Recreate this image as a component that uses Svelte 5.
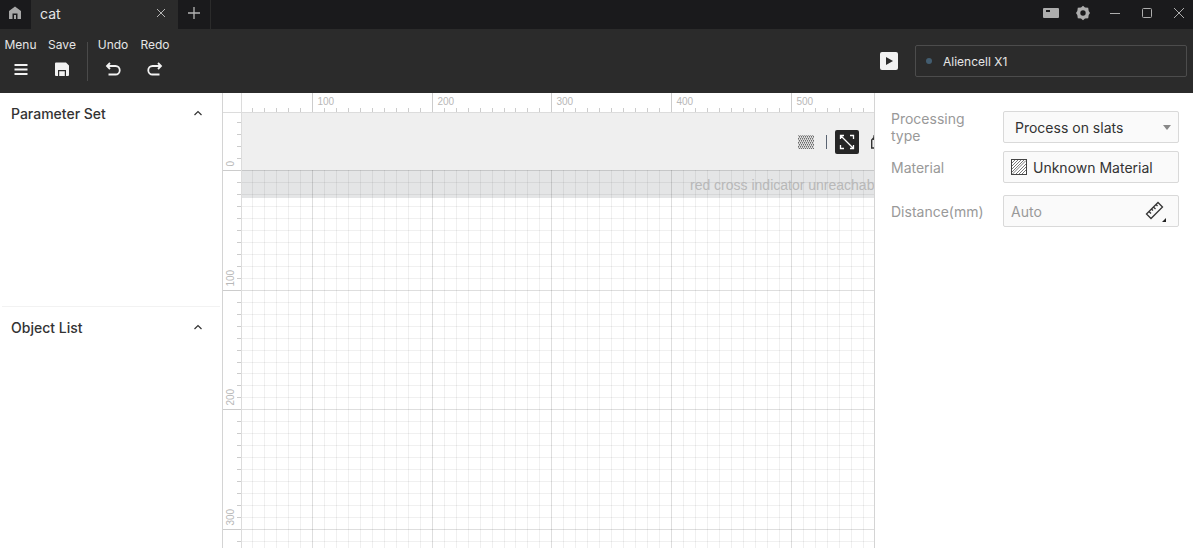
<script lang="ts">
	let machine = $state('Aliencell X1')
	let processing = $state('slats')
	let distance = $state('')

	let width = $state(0)
	let height = $state(0)

	const step = 11.97
	const originX = 89
	const originY = 77
	const rulerW = 18
	const rulerH = 19

	const cols = $derived(
		Array.from({ length: Math.max(0, Math.ceil((width - originX) / step)) + 5 }, (_, i) => i - 5).map((n) => ({
			x: Math.round(originX + n * step) + 0.5,
			major: n % 10 === 0,
			label: 100 + n * 10,
		})),
	)
	const rows = $derived(
		Array.from({ length: Math.max(0, Math.ceil((height - originY) / step)) + 4 }, (_, i) => i - 4).map((n) => ({
			y: Math.round(originY + n * step) + 0.5,
			major: n % 10 === 0,
			label: n * 10,
		})),
	)
</script>

<div class="app">
	<header>
		<nav class="tabs">
			<button class="home" aria-label="Home">
				<svg width="14" height="14" viewBox="0 0 14 14">
					<path d="M7 .5 13 5v8H9.500V7.500h-5V13H1V5Z" fill="#a8a8a8" />
					<path d="M7 9v4" stroke="#a8a8a8" stroke-width="2" />
				</svg>
			</button>
			<div class="tab">
				<span>cat</span>
				<button aria-label="Close tab">
					<svg width="10" height="10" viewBox="0 0 10 10"><path d="m1 1 8 8M9 1 1 9" stroke="#b4b4b4" /></svg>
				</button>
			</div>
			<button class="add" aria-label="New tab">
				<svg width="12" height="12" viewBox="0 0 12 12"><path d="M6 0v12M0 6h12" stroke="#b4b4b4" stroke-width="1.300" /></svg>
			</button>
			<div class="window">
				<button aria-label="Messages">
					<svg width="16" height="16" viewBox="0 0 16 16"><path fill-rule="evenodd" d="M1 3h14a1 1 0 0 1 1 1v8a1 1 0 0 1-1 1H1a1 1 0 0 1-1-1V4a1 1 0 0 1 1-1Zm2 2v2h4V5Z" fill="#adadad" /></svg>
				</button>
				<button aria-label="Settings">
					<svg width="16" height="16" viewBox="0 0 16 16">
						<path
							fill-rule="evenodd"
							d="m8 .8 2 1.700 3.200.300.500 3.200L15 8l-1.300 2-.500 3.200-3.200.300-2 1.700-2-1.700-3.200-.300-.500-3.200L1 8l1.300-2 .500-3.200L6 2.500Zm0 4.500a2.700 2.700 0 1 0 0 5.400 2.700 2.700 0 0 0 0-5.400Z"
							fill="#adadad"
						/>
					</svg>
				</button>
				<button aria-label="Minimize">
					<svg width="16" height="16" viewBox="0 0 16 16"><path d="M3 8.500h10" stroke="#adadad" /></svg>
				</button>
				<button aria-label="Maximize">
					<svg width="16" height="16" viewBox="0 0 16 16"><rect x="3.500" y="3.500" width="9" height="9" rx="1" fill="none" stroke="#adadad" /></svg>
				</button>
				<button aria-label="Close">
					<svg width="16" height="16" viewBox="0 0 16 16"><path d="m3 3 10 10M13 3 3 13" stroke="#adadad" /></svg>
				</button>
			</div>
		</nav>

		<div class="toolbar">
			<button class="tool">
				Menu
				<svg width="16" height="16" viewBox="0 0 16 16"><path d="M1.500 4h13M1.500 8.500h13M1.500 13h13" stroke="#f2f2f2" stroke-width="1.800" /></svg>
			</button>
			<button class="tool">
				Save
				<svg width="16" height="16" viewBox="0 0 16 16">
					<path fill-rule="evenodd" d="M2 1.500h10l3 3V14a1 1 0 0 1-1 1h-2V9H4v6H2a1 1 0 0 1-1-1V2.500a1 1 0 0 1 1-1ZM5.200 10.200h5.600V15H5.200Z" fill="#f2f2f2" />
				</svg>
			</button>
			<span class="divider"></span>
			<button class="tool">
				Undo
				<svg width="16" height="16" viewBox="0 0 16 16"><path d="M5 2 2 5l3 3M2 5h8.500a4 4 0 0 1 0 8.500H3.500" fill="none" stroke="#f2f2f2" stroke-width="1.800" /></svg>
			</button>
			<button class="tool">
				Redo
				<svg width="16" height="16" viewBox="0 0 16 16"><path d="m11 2 3 3-3 3M14 5H5.500a4 4 0 0 0 0 8.500h7" fill="none" stroke="#f2f2f2" stroke-width="1.800" /></svg>
			</button>
			<button class="play" aria-label="Preview">
				<svg width="18" height="18" viewBox="0 0 18 18"><path d="M6 5v8l7-4Z" fill="#2b2b2b" /></svg>
			</button>
			<button class="machine"><i></i>{machine}</button>
		</div>
	</header>

	<main>
		<aside class="left">
			<section>
				<button class="heading">
					Parameter Set
					<svg width="8" height="6" viewBox="0 0 8 6"><path d="m.5 5 3.500-3.500L7.500 5" fill="none" stroke="#333" stroke-width="1.200" /></svg>
				</button>
			</section>
			<section>
				<button class="heading">
					Object List
					<svg width="8" height="6" viewBox="0 0 8 6"><path d="m.5 5 3.500-3.500L7.500 5" fill="none" stroke="#333" stroke-width="1.200" /></svg>
				</button>
			</section>
		</aside>

		<div class="board" bind:clientWidth={width} bind:clientHeight={height}>
			<svg class="grid" width="100%" height="100%" shape-rendering="crispEdges">
				<rect x="19" y="20" width="100%" height="57" fill="#efefef" />
				<rect x="19" y="77" width="100%" height="28" fill="#e4e5e6" />
				{#each cols as { x, major }}
					<line x1={x} x2={x} y1={originY} y2="100%" class:major />
				{/each}
				{#each rows.filter((r) => r.y > originY) as { y, major }}
					<line x1={rulerW} x2="100%" y1={y} y2={y} class:major />
				{/each}

				{#each cols as { x, major, label }}
					<line class="tick" x1={x} x2={x} y1={major ? 0 : 15} y2={rulerH} />
					{#if major}<text x={x + 5} y="12">{label}</text>{/if}
				{/each}
				{#each rows as { y, major, label }}
					<line class="tick" x1={major ? 0 : 14} x2={rulerW} y1={y} y2={y} />
					{#if major}<text transform="translate(11 {y - 4}) rotate(-90)">{label}</text>{/if}
				{/each}
				<line class="edge" x1="0" x2="100%" y1="19.500" y2="19.500" />
				<line class="edge" x1="18.500" x2="18.500" y1="0" y2="100%" />
				<text class="note" x="467" y="97">red cross indicator unreachab</text>
			</svg>

			<div class="canvas-tools">
				<button aria-label="Fill pattern">
					<svg width="16" height="16" viewBox="0 0 16 16">
						<defs>
							<pattern id="mesh" width="2" height="4" patternUnits="userSpaceOnUse">
								<path d="M0 0h1v1H0zM1 2h1v1H1z" fill="#6c6c6c" />
								<path d="M0 1h1v1H0zM1 3h1v1H1z" fill="#a0a0a0" />
							</pattern>
						</defs>
						<rect y="1" width="16" height="14" fill="#dcdcdc" />
						<rect y="1" width="16" height="14" fill="url(#mesh)" />
					</svg>
				</button>
				<span></span>
				<button class="active" aria-label="Frame">
					<svg width="16" height="16" viewBox="0 0 16 16"><path d="M1.500 5V1.500H5M11 1.500h3.500V5M14.500 11v3.500H11M5 14.500H1.500V11M2 2l12 12" fill="none" stroke="#fff" stroke-width="1.300" /></svg>
				</button>
				<button class="camera" aria-label="Camera">
					<svg width="16" height="16" viewBox="0 0 16 16"><path d="M.7 14V6L3 3.500V2h10v1.500L15.300 6v8ZM3 3.500V6" fill="none" stroke="#333" stroke-width="1.400" /></svg>
				</button>
			</div>
		</div>

		<form class="right">
			<label for="processing">Processing type</label>
			<div class="select">
				<select id="processing" bind:value={processing}>
					<option value="slats">Process on slats</option>
				</select>
				<svg width="8" height="5" viewBox="0 0 8 5"><path d="M0 0h8L4 5Z" fill="#888" /></svg>
			</div>

			<label for="material">Material</label>
			<button id="material" class="field" type="button">
				<svg width="16" height="16" viewBox="0 0 16 16">
					<rect x=".5" y=".5" width="15" height="15" fill="#fff" stroke="#444" />
					<path d="M1 4l3-3M1 7l6-6M1 10l9-9M1 13 13 1M1.500 15 15 1.500M5 15 15 5M8 15l7-7M11 15l4-4" stroke="#555" stroke-width=".8" />
				</svg>
				Unknown Material
			</button>

			<label class="distance" for="distance">Distance(mm)</label>
			<div class="field distance">
				<input id="distance" type="text" placeholder="Auto" bind:value={distance} />
				<button type="button" aria-label="Measure">
					<svg width="22" height="22" viewBox="0 0 22 22">
						<path d="m1.500 14 11.500-11.500 4.500 4.500L6 18.500ZM4 11.500l2 2M6.500 9l1.500 1.500M8.500 7l2 2M11 4.500 12.500 6" fill="none" stroke="#333" stroke-width="1.300" />
						<path d="M21 18v4h-4Z" fill="#222" />
					</svg>
				</button>
			</div>
		</form>
	</main>
</div>

<style>
	:global(body) {
		margin: 0;
	}

	.app {
		min-height: 100vh;
		display: flex;
		flex-direction: column;
		font-family: Inter, sans-serif;
		font-size: 14px;
		color: #333;
	}
	button {
		padding: 0;
		border: none;
		background: none;
		font: inherit;
		color: inherit;
		cursor: pointer;
	}
	svg {
		display: block;
		flex: none;
	}

	/* title bar */
	header {
		background: #2b2b2b;
		color: #e6e6e6;
	}
	.tabs {
		height: 29px;
		display: flex;
		background: #1a1a1c;
	}
	.tabs button {
		display: grid;
		place-items: center;
	}
	.home {
		width: 31px;
	}
	.tabs .home {
		padding: 0 2px 3px 0;
	}
	.tab {
		width: 147px;
		box-sizing: border-box;
		padding: 0 12px 3px 9px;
		display: flex;
		align-items: center;
		justify-content: space-between;
		background: #2b2b2b;
	}
	.tabs .add {
		width: 33px;
		padding-bottom: 3px;
		border-right: 1px solid #2b2b2b;
	}
	.window {
		margin-left: auto;
		padding: 0 6px 3px 0;
		display: flex;
		gap: 16px;
	}

	/* toolbar */
	.toolbar {
		height: 64px;
		box-sizing: border-box;
		padding: 0 6px 0 0;
		display: flex;
		align-items: center;
	}
	.tool {
		width: 42px;
		height: 48px;
		display: flex;
		flex-direction: column;
		align-items: center;
		gap: 8px;
		font-size: 12px;
		line-height: 16px;
	}
	.tool:first-child {
		width: 41px;
	}
	.divider {
		width: 1px;
		height: 39px;
		margin: 0 4px;
		background: #4a4a4a;
	}
	.play {
		width: 18px;
		height: 18px;
		margin: 0 17px 0 auto;
		border-radius: 2px;
		background: #f2f2f2;
	}
	.machine {
		width: 272px;
		height: 32px;
		padding: 0 10px;
		display: flex;
		align-items: center;
		gap: 11px;
		border: 1px solid #4c4c4c;
		border-radius: 2px;
		font-size: 12px;
	}
	.machine i {
		width: 6px;
		height: 6px;
		border-radius: 50%;
		background: #435d70;
	}

	/* panels */
	main {
		flex: 1;
		display: flex;
	}
	.left {
		width: 222px;
		flex: none;
	}
	.left section {
		height: 213px;
		margin: 0 2px;
	}
	.left section + section {
		border-top: 1px solid #f2f2f2;
	}
	.heading {
		width: 100%;
		height: 40px;
		padding: 0 18px 0 9px;
		display: flex;
		align-items: center;
		justify-content: space-between;
		font-weight: 500;
	}

	/* work area */
	.board {
		position: relative;
		flex: 1;
		min-width: 0;
		overflow: hidden;
		border-left: 1px solid #d4d4d4;
		border-right: 1px solid #d4d4d4;
	}
	.grid {
		position: absolute;
		inset: 0;
	}
	.grid line {
		stroke: #000;
		stroke-opacity: 0.06;
	}
	.grid .major {
		stroke-opacity: 0.13;
	}
	.grid .tick {
		stroke: #ccc;
		stroke-opacity: 1;
	}
	.grid .edge {
		stroke: #dcdcdc;
		stroke-opacity: 1;
	}
	.grid text {
		font-family: "Liberation Sans", sans-serif;
		font-size: 10px;
		fill: #b8b8b8;
	}
	.grid .note {
		font-size: 14px;
	}
	.canvas-tools {
		position: absolute;
		top: 37px;
		left: 571px;
		display: flex;
		align-items: center;
	}
	.canvas-tools button {
		width: 24px;
		height: 24px;
		display: grid;
		place-items: center;
		border-radius: 2px;
	}
	.canvas-tools span {
		width: 1px;
		height: 14px;
		margin: 0 8px;
		background: #5a6472;
	}
	.canvas-tools .active {
		background: #262626;
	}
	.canvas-tools .camera {
		margin-left: 8px;
	}

	/* settings */
	.right {
		width: 318px;
		flex: none;
		box-sizing: border-box;
		padding: 18px 14px 0 16px;
		display: grid;
		grid-template-columns: 112px minmax(0, 1fr);
		grid-template-rows: 32px 32px 36px;
		align-items: center;
		row-gap: 8px;
	}
	.right label {
		padding-right: 24px;
		line-height: 17px;
		color: #999;
	}
	.right .distance {
		margin-top: 4px;
	}
	.right label.distance {
		padding-right: 0;
	}
	.field,
	select {
		width: 100%;
		height: 32px;
		box-sizing: border-box;
		border: 1px solid #d9d9d9;
		border-radius: 2px;
		background: #fafafa;
		font: inherit;
		color: #333;
	}
	.field {
		padding: 0 7px;
		display: flex;
		align-items: center;
		gap: 6px;
	}
	.select {
		display: grid;
		align-items: center;
	}
	.select > * {
		grid-area: 1 / 1;
	}
	.select svg {
		justify-self: end;
		margin-right: 8px;
		pointer-events: none;
	}
	select {
		padding: 0 11px;
		appearance: none;
	}
	.field input {
		flex: 1;
		min-width: 0;
		padding: 0;
		border: none;
		outline: none;
		background: none;
		font: inherit;
		color: #333;
	}
	.field button {
		margin-right: 4px;
	}
	input::placeholder {
		color: #999;
	}
</style>
